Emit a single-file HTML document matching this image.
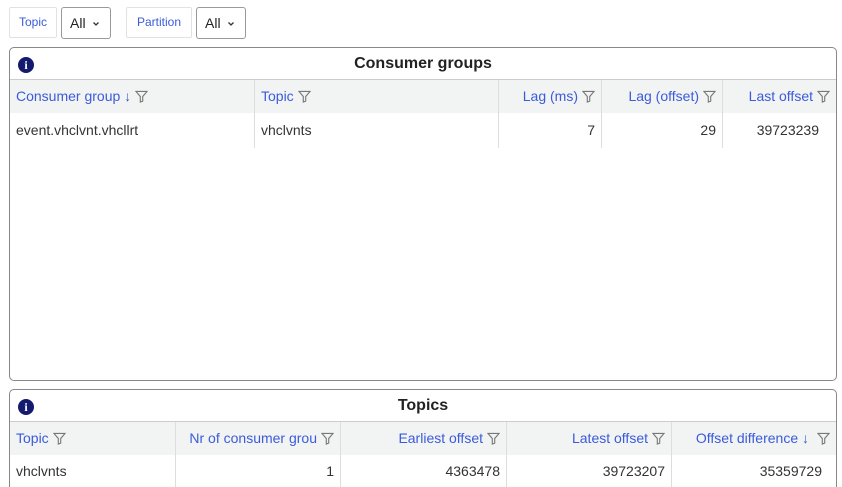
<!DOCTYPE html>
<html><head><style>
html,body{margin:0;width:842px;height:487px;overflow:hidden}
body{background:#fff;font-family:"Liberation Sans",Arial,sans-serif;font-size:14px;color:#333;position:relative}
.btn{position:absolute;top:7px;height:31px;box-sizing:border-box;border:1px solid #e2e2e2;border-radius:2px;color:#3b5bdb;font-size:12px;line-height:29px;text-align:center}
.sel{position:absolute;top:7px;height:32px;box-sizing:border-box;border:1px solid #999;border-radius:3px;color:#222;font-size:14px;line-height:30px;padding-left:8px}
.sel svg{width:8px;height:6px;margin-left:6px;vertical-align:1px}
.panel{position:absolute;left:9px;width:828px;box-sizing:border-box;border:1px solid #888;border-radius:5px;overflow:hidden}
.title{height:31px;border-bottom:1px solid #ccc;text-align:center;font-size:16px;font-weight:bold;color:#222;line-height:31px;position:relative}
.info{position:absolute;left:8px;top:9px;width:16px;height:16px;border-radius:50%;background:#141a6e;color:#fff;font:bold 12px/16px "Liberation Serif",serif;text-align:center}
.row{position:relative;height:33px}
.hdr{background:#f2f3f3}
.c{position:absolute;top:0;height:100%;box-sizing:border-box;line-height:33px;padding:0 6px;white-space:nowrap;overflow:hidden;border-left:1px solid #ddd}
.c:first-child{border-left:none}
.hdr .c{color:#3b5bdb}
.r{text-align:right}
svg.f{width:13px;height:13px;vertical-align:-2px;margin-left:4px}
</style></head><body>
<div class="btn" style="left:9px;width:48px">Topic</div>
<div class="sel" style="left:61px;width:50px">All<svg viewBox="0 0 8 6"><path d="M1.5 1.5L4 4l2.5-2.5" fill="none" stroke="#333" stroke-width="1.3"/></svg></div>
<div class="btn" style="left:126px;width:66px">Partition</div>
<div class="sel" style="left:196px;width:50px">All<svg viewBox="0 0 8 6"><path d="M1.5 1.5L4 4l2.5-2.5" fill="none" stroke="#333" stroke-width="1.3"/></svg></div>

<div class="panel" style="top:47px;height:334px">
<div class="title"><div class="info">i</div>Consumer groups</div>
<div class="row hdr">
<div class="c" style="left:0;width:244px">Consumer group ↓<svg class="f" viewBox="0 0 14 14"><path d="M1 1.5h12L8.3 7v5L5.7 13V7z" fill="none" stroke="#777" stroke-width="1.2"/></svg></div>
<div class="c" style="left:244px;width:244px">Topic<svg class="f" viewBox="0 0 14 14"><path d="M1 1.5h12L8.3 7v5L5.7 13V7z" fill="none" stroke="#777" stroke-width="1.2"/></svg></div>
<div class="c r" style="left:488px;width:103px">Lag (ms)<svg class="f" viewBox="0 0 14 14"><path d="M1 1.5h12L8.3 7v5L5.7 13V7z" fill="none" stroke="#777" stroke-width="1.2"/></svg></div>
<div class="c r" style="left:591px;width:121px">Lag (offset)<svg class="f" viewBox="0 0 14 14"><path d="M1 1.5h12L8.3 7v5L5.7 13V7z" fill="none" stroke="#777" stroke-width="1.2"/></svg></div>
<div class="c r" style="left:712px;width:114px">Last offset<svg class="f" viewBox="0 0 14 14"><path d="M1 1.5h12L8.3 7v5L5.7 13V7z" fill="none" stroke="#777" stroke-width="1.2"/></svg></div>
</div>
<div class="row" style="height:35px">
<div class="c" style="left:0;width:244px;line-height:35px">event.vhclvnt.vhcllrt</div>
<div class="c" style="left:244px;width:244px;line-height:35px">vhclvnts</div>
<div class="c r" style="left:488px;width:103px;line-height:35px">7</div>
<div class="c r" style="left:591px;width:121px;line-height:35px">29</div>
<div class="c r" style="left:712px;width:114px;line-height:35px;padding-right:17px">39723239</div>
</div>
</div>

<div class="panel" style="top:389px;height:110px">
<div class="title"><div class="info">i</div>Topics</div>
<div class="row hdr">
<div class="c" style="left:0;width:165px">Topic<svg class="f" viewBox="0 0 14 14"><path d="M1 1.5h12L8.3 7v5L5.7 13V7z" fill="none" stroke="#777" stroke-width="1.2"/></svg></div>
<div class="c r" style="left:165px;width:165px">Nr of consumer grou<svg class="f" viewBox="0 0 14 14"><path d="M1 1.5h12L8.3 7v5L5.7 13V7z" fill="none" stroke="#777" stroke-width="1.2"/></svg></div>
<div class="c r" style="left:330px;width:166px">Earliest offset<svg class="f" viewBox="0 0 14 14"><path d="M1 1.5h12L8.3 7v5L5.7 13V7z" fill="none" stroke="#777" stroke-width="1.2"/></svg></div>
<div class="c r" style="left:496px;width:165px">Latest offset<svg class="f" viewBox="0 0 14 14"><path d="M1 1.5h12L8.3 7v5L5.7 13V7z" fill="none" stroke="#777" stroke-width="1.2"/></svg></div>
<div class="c r" style="left:661px;width:165px">Offset difference ↓<svg class="f" viewBox="0 0 14 14" style="margin-left:8px"><path d="M1 1.5h12L8.3 7v5L5.7 13V7z" fill="none" stroke="#777" stroke-width="1.2"/></svg></div>
</div>
<div class="row">
<div class="c" style="left:0;width:165px">vhclvnts</div>
<div class="c r" style="left:165px;width:165px">1</div>
<div class="c r" style="left:330px;width:166px">4363478</div>
<div class="c r" style="left:496px;width:165px">39723207</div>
<div class="c r" style="left:661px;width:165px;padding-right:14px">35359729</div>
</div>
</div>
</body></html>
